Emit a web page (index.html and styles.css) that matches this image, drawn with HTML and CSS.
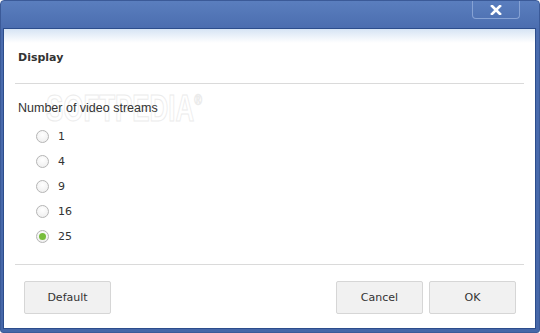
FILE: index.html
```html
<!DOCTYPE html>
<html lang="en">
<head>
    <meta charset="UTF-8">
    <title>Display</title>
    <link rel="stylesheet" href="styles.css">
</head>
<body>
    <div class="window">
        <div class="titlebar">
            <div class="close-btn">
                <svg width="12" height="10" viewBox="0 0 12 10">
                    <path d="M2 1 L10 9 M10 1 L2 9" stroke="#fff" stroke-width="2.6" stroke-linecap="square"/>
                </svg>
            </div>
        </div>
        <div class="content">
            <div class="watermark">SOFTPEDIA<sup>®</sup></div>

            <div class="header">Display</div>
            <div class="separator"></div>

            <div class="section">
                <div class="section-title">Number of video streams</div>
                <div class="radio-list">
                    <label class="radio-row"><span class="radio"></span>1</label>
                    <label class="radio-row"><span class="radio"></span>4</label>
                    <label class="radio-row"><span class="radio"></span>9</label>
                    <label class="radio-row"><span class="radio"></span>16</label>
                    <label class="radio-row"><span class="radio checked"></span>25</label>
                </div>
            </div>

            <div class="separator"></div>
            <div class="footer">
                <button class="btn">Default</button>
                <div class="footer-right">
                    <button class="btn">Cancel</button>
                    <button class="btn">OK</button>
                </div>
            </div>
        </div>
    </div>
</body>
</html>
```

FILE: styles.css
```css
body {
    margin: 0;
    font-family: "DejaVu Sans", Verdana, sans-serif;
    background: #fff;
}
.window {
    width: 540px;
    height: 333px;
    box-sizing: border-box;
    background: linear-gradient(#5a7ebe, #4a6cae 30px, #4667a8);
    border: 1px solid #3b5a98;
    border-radius: 4px 4px 3px 3px;
    padding: 0 3px 3px 2px;
    display: flex;
    flex-direction: column;
}
.titlebar {
    height: 27px;
    display: flex;
    justify-content: flex-end;
    padding-right: 16px;
}
.close-btn {
    width: 46px;
    height: 17px;
    border: 1px solid #86a2d4;
    border-top: none;
    border-radius: 0 0 4px 4px;
    display: flex;
    align-items: center;
    justify-content: center;
}
.content {
    flex: 1;
    position: relative;
    background: linear-gradient(#d6e4f4, #ffffff 14px);
    border: 1px solid #2c4d8c;
    display: flex;
    flex-direction: column;
    color: #333;
    overflow: hidden;
}
.watermark {
    position: absolute;
    left: 42px;
    top: 59px;
    font-family: "Liberation Sans", Arial, sans-serif;
    font-size: 37px;
    font-weight: bold;
    color: #fff;
    -webkit-text-stroke: 1px #ebebeb;
    transform: scaleX(0.7);
    transform-origin: left top;
}
.watermark sup {
    font-size: 15px;
    font-weight: normal;
    vertical-align: 16px;
}
.header {
    position: relative;
    height: 54px;
    box-sizing: border-box;
    padding: 21px 0 0 14px;
    font-size: 11px;
    font-weight: bold;
    line-height: 16px;
}
.separator {
    height: 1px;
    margin: 0 11px 0 11px;
    background: #dadada;
}
.section {
    position: relative;
    flex: 1;
    padding: 16px 0 0 14px;
}
.section-title {
    font-family: "Liberation Sans", Arial, sans-serif;
    font-size: 12.5px;
    line-height: 16px;
}
.radio-list {
    display: flex;
    flex-direction: column;
    margin-top: 8px;
    padding-left: 18px;
}
.radio-row {
    height: 25px;
    display: flex;
    align-items: center;
    gap: 9px;
    font-size: 11px;
}
.radio {
    width: 11px;
    height: 11px;
    border-radius: 50%;
    border: 1px solid #b5b5b5;
    background: radial-gradient(circle at 50% 35%, #ffffff, #ececec);
    display: flex;
    align-items: center;
    justify-content: center;
}
.radio.checked::after {
    content: "";
    width: 7px;
    height: 7px;
    border-radius: 50%;
    background: #78bd3c;
}
.footer {
    height: 63px;
    box-sizing: border-box;
    padding: 16px 19px 0 20px;
    display: flex;
    justify-content: space-between;
    align-items: flex-start;
}
.footer-right {
    display: flex;
    gap: 6px;
}
.btn {
    width: 87px;
    height: 33px;
    background: #f1f1f1;
    border: 1px solid #d6d6d6;
    border-radius: 2px;
    font-family: "DejaVu Sans", Verdana, sans-serif;
    font-size: 11px;
    color: #333;
    padding: 0;
}
```
